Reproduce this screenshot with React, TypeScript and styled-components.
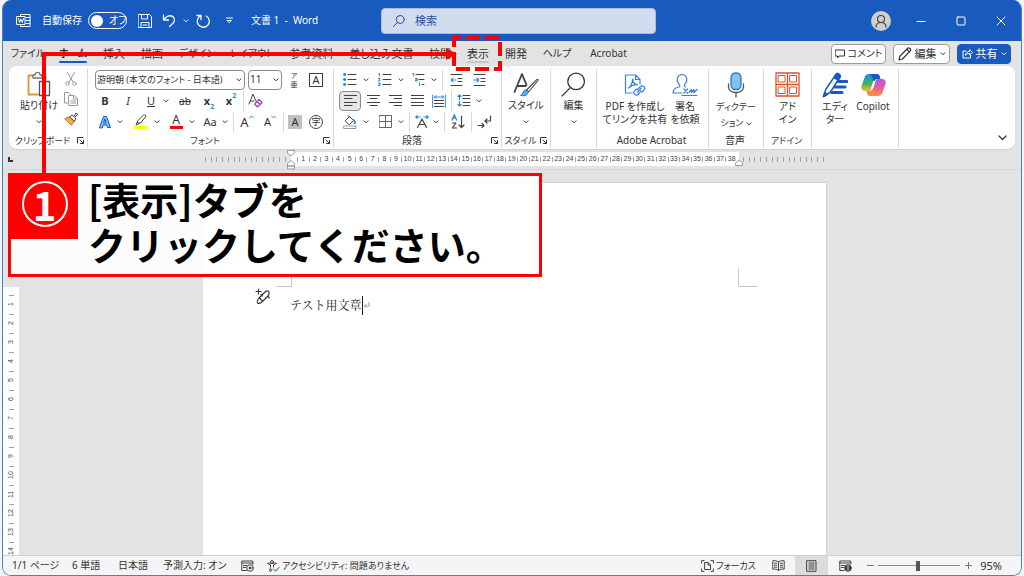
import React from "react";
import styled, { createGlobalStyle } from "styled-components";

const UI = `"Noto Sans", "Noto Sans CJK JP", sans-serif`;
const JP = `"Noto Sans CJK JP", "Noto Sans", sans-serif`;
const BLUE = "#185abd";
const INK = "#424242";
const ACCENT = "#2b88d8";

const Global = createGlobalStyle`
  * { box-sizing: border-box; }
  html, body, #root { margin: 0; height: 100%; }
  body { background: #f4f4f4; font-family: ${UI}; font-size: 10px; line-height: 13px; color: #333; font-feature-settings: "palt"; overflow: hidden; }
  button, input, select { font: inherit; font-feature-settings: inherit; color: inherit; margin: 0; }
  button { background: none; border: 0; padding: 0; }
`;

const Window = styled.div`
  position: relative;
  display: flex;
  flex-direction: column;
  height: 100vh;
  margin: 0 2px;
  border: 1px solid #4a7fcf;
  border-top: 0;
  border-radius: 9px;
  overflow: hidden;
  background: #e3e3e3;
`;

/* ---------- title bar ---------- */
const TitleBar = styled.header`
  display: flex;
  align-items: center;
  height: 41px;
  flex: none;
  background: ${BLUE};
  color: #fff;
`;
const TitleSide = styled.div<{ $end?: boolean }>`
  flex: 1 1 0;
  display: flex;
  align-items: center;
  justify-content: ${(p) => (p.$end ? "flex-end" : "flex-start")};
  padding: ${(p) => (p.$end ? "0" : "0 0 0 13px")};
  white-space: nowrap;
`;
const TitleButton = styled.button<{ $w: number }>`
  display: flex;
  align-items: center;
  justify-content: center;
  width: ${(p) => p.$w}px;
  height: 24px;
`;
const AutoSave = styled.label`
  display: flex;
  align-items: center;
  gap: 6px;
  margin: 0 7px 0 11px;
`;
const Toggle = styled.span`
  display: flex;
  align-items: center;
  gap: 6px;
  width: 39px;
  height: 17px;
  padding: 0 2px;
  border: 1px solid #fff;
  border-radius: 9px;
`;
const ToggleInput = styled.input`
  appearance: none;
  flex: none;
  width: 12px;
  height: 12px;
  border-radius: 50%;
  background: #fff;
`;
const DocName = styled.h1`
  margin: 0 0 0 10px;
  font-size: 10px;
  font-weight: 400;
  white-space: pre;
`;
const SearchBox = styled.label`
  display: flex;
  align-items: center;
  gap: 10px;
  flex: 0 1 275px;
  height: 26px;
  padding: 0 11px;
  border: 1px solid #a9bcdf;
  border-radius: 4px;
  background: #d1dcef;
  color: #1d4f9f;
`;
const SearchInput = styled.input`
  flex: 1;
  min-width: 0;
  border: 0;
  padding: 0;
  background: transparent;
  font-size: 11px;
  &::placeholder { color: #1d4f9f; opacity: 1; }
`;
const Avatar = styled.button`
  display: flex;
  align-items: center;
  justify-content: center;
  width: 20px;
  height: 20px;
  margin-right: 10px;
  border-radius: 50%;
  background: #cfcfcf;
  color: #444;
`;

/* ---------- tabs ---------- */
const TabRow = styled.nav`
  display: flex;
  align-items: center;
  height: 25px;
  flex: none;
  padding: 0 10px 0 2px;
`;
const Tab = styled.button<{ $w: number; $mark?: string }>`
  position: relative;
  width: ${(p) => p.$w}px;
  height: 25px;
  padding-bottom: 1px;
  white-space: nowrap;
  font-size: ${(p) => (p.$w > 40 && p.$w < 60 ? 10 : 11)}px;
  font-weight: ${(p) => (p.$mark === BLUE ? 700 : 400)};
  &::after {
    content: "";
    position: absolute;
    left: 8px;
    right: 8px;
    bottom: 3px;
    height: 2px;
    border-radius: 1px;
    background: ${(p) => p.$mark || "transparent"};
  }
`;
const TabActions = styled.div`
  display: flex;
  gap: 7px;
  margin-left: auto;
`;
const ActionButton = styled.button<{ $w: number; $primary?: boolean }>`
  display: flex;
  align-items: center;
  justify-content: center;
  gap: 3px;
  width: ${(p) => p.$w}px;
  height: 20px;
  white-space: nowrap;
  border: 1px solid ${(p) => (p.$primary ? BLUE : "#9c9c9c")};
  border-radius: 4px;
  background: ${(p) => (p.$primary ? BLUE : "#fff")};
  color: ${(p) => (p.$primary ? "#fff" : "#333")};
`;

/* ---------- ribbon ---------- */
const Ribbon = styled.section`
  display: flex;
  flex: none;
  margin: 0 6px;
  padding: 3px 0 1px;
  background: #fff;
  border-radius: 8px;
  box-shadow: 0 1px 1px #cfcfcf;
`;
const Group = styled.div<{ $w: number }>`
  display: flex;
  flex-direction: column;
  flex: 0 0 ${(p) => p.$w}px;
  border-right: 1px solid #d8d8d8;
`;
const GroupBody = styled.div<{ $pad?: number }>`
  display: flex;
  justify-content: ${(p) => (p.$pad === undefined ? "center" : "flex-start")};
  padding-left: ${(p) => p.$pad || 0}px;
  height: 63px;
`;
const GroupLabel = styled.div`
  display: flex;
  align-items: center;
  height: 16px;
  padding-right: 2px;
  white-space: nowrap;
`;
const LabelText = styled.span<{ $kana?: boolean }>`
  flex: 1;
  text-align: center;
  font-size: ${(p) => (p.$kana ? 9 : 10)}px;
`;
const Rows = styled.div`
  display: flex;
  flex-direction: column;
`;
const Row = styled.div<{ $gap: number }>`
  display: flex;
  align-items: center;
  gap: ${(p) => p.$gap}px;
  height: 21px;
`;
const Tool = styled.button<{ $w?: number; $on?: boolean }>`
  display: flex;
  align-items: center;
  justify-content: center;
  width: ${(p) => p.$w || 20}px;
  height: 20px;
  border: ${(p) => (p.$on ? "1px solid #8a8a8a" : "0")};
  border-radius: 4px;
  background: ${(p) => (p.$on ? "#e6e6e6" : "none")};
`;
const Split = styled.div`
  display: flex;
`;
const Rule = styled.span`
  width: 1px;
  height: 20px;
  background: #d8d8d8;
`;
const Field = styled.div<{ $w: number; $size: number }>`
  position: relative;
  display: flex;
  width: ${(p) => p.$w}px;
  height: 20px;
  font-size: ${(p) => p.$size}px;
`;
const Select = styled.select`
  appearance: none;
  width: 100%;
  height: 20px;
  padding: 0 10px 0 1px;
  border: 1px solid #8a8a8a;
  border-radius: 4px;
  background: #fff;
`;
const FieldArrow = styled.span`
  position: absolute;
  right: 3px;
  top: 0;
  display: flex;
  align-items: center;
  height: 20px;
  pointer-events: none;
`;
const BigButton = styled.button<{ $w: number }>`
  display: flex;
  flex-direction: column;
  align-items: center;
  width: ${(p) => p.$w}px;
  white-space: nowrap;
`;
const BigIcon = styled.span`
  display: flex;
  align-items: center;
  justify-content: center;
  height: 31px;
`;
const SmallColumn = styled.div`
  display: flex;
  flex-direction: column;
`;
const RibbonEnd = styled.div`
  flex: 1;
  display: flex;
  align-items: flex-end;
  justify-content: flex-end;
  padding: 0 7px 0 0;
`;
const Glyph = styled.span<{ $size: number; $bold?: boolean; $italic?: boolean; $line?: string }>`
  font-size: ${(p) => p.$size}px;
  line-height: 16px;
  font-weight: ${(p) => (p.$bold ? 700 : 400)};
  font-style: ${(p) => (p.$italic ? "italic" : "normal")};
  text-decoration: ${(p) => p.$line || "none"};
`;
const Script = styled.span<{ $up?: boolean }>`
  align-self: ${(p) => (p.$up ? "flex-start" : "flex-end")};
  font-size: 7px;
  line-height: 9px;
  font-weight: 700;
  color: ${ACCENT};
`;
const Ruby = styled.span`
  display: flex;
  flex-direction: column;
  align-items: center;
  font-size: 7px;
  line-height: 9px;
`;
const Boxed = styled.span<{ $kind: "frame" | "shade" | "ring" }>`
  display: flex;
  align-items: center;
  justify-content: center;
  width: 14px;
  height: 14px;
  font-size: ${(p) => (p.$kind === "ring" ? 9 : 11)}px;
  border: ${(p) => (p.$kind === "shade" ? "0" : "1px solid #424242")};
  border-radius: ${(p) => (p.$kind === "ring" ? "50%" : "0")};
  background: ${(p) => (p.$kind === "shade" ? "#c0c0c0" : "none")};
`;
const Swatch = styled.span<{ $c: string }>`
  display: flex;
  flex-direction: column;
  align-items: center;
  justify-content: flex-end;
  width: 13px;
  height: 15px;
  font-size: 12px;
  line-height: 12px;
  border-bottom: 3px solid ${(p) => p.$c};
`;

/* ---------- rulers and document ---------- */
const RulerRow = styled.div`
  display: flex;
  flex: none;
  height: 21px;
  border-bottom: 1px solid #d8d8d8;
`;
const TabStop = styled.button`
  display: flex;
  align-items: center;
  justify-content: center;
  width: 16px;
`;
const Centred = styled.div`
  flex: 1;
  display: flex;
  justify-content: center;
  padding-right: 10px;
`;
const Ruler = styled.div`
  display: flex;
  align-items: center;
  width: 624px;
  height: 20px;
`;
const RulerMargin = styled.div<{ $end?: boolean }>`
  flex: 0 0 88px;
  display: flex;
  justify-content: space-between;
  padding: ${(p) => (p.$end ? "0 3px 0 4px" : "0 5px 0 2px")};
`;
const Tick = styled.span`
  width: 1px;
  height: 5px;
  background: #a3a3a3;
`;
const RulerScale = styled.div`
  position: relative;
  flex: 1;
  display: grid;
  grid-template-columns: repeat(38, 1fr);
  align-items: center;
  height: 14px;
  padding: 0 2px 0 6px;
  background: #fff;
  font: 7px/14px "Liberation Sans", sans-serif;
  color: #444;
`;
const Mark = styled.span`
  display: flex;
  align-items: center;
  justify-content: center;
  height: 5px;
  border-left: 1px solid #a3a3a3;
`;
const Indent = styled.span<{ $end?: boolean }>`
  position: absolute;
  top: -2px;
  ${(p) => (p.$end ? "right: -4px;" : "left: -4px;")}
  display: flex;
`;
const Work = styled.main`
  flex: 1;
  display: flex;
  min-height: 0;
`;
const SideRuler = styled.div`
  flex: none;
  width: 16px;
  padding-top: 117px;
  overflow: hidden;
`;
const SideScale = styled.div`
  height: 100%;
  padding-top: 8px;
  overflow: hidden;
  background: #fff;
  font: 7px/8px "Liberation Sans", sans-serif;
  color: #444;
`;
const SideMark = styled.div`
  display: flex;
  flex-direction: column;
  align-items: center;
  height: 19px;
`;
const SideTick = styled.span`
  flex: none;
  width: 5px;
  height: 1px;
  background: #a3a3a3;
`;
const SideNumber = styled.span`
  flex: none;
  display: flex;
  justify-content: center;
  height: 12px;
  margin-top: 2px;
  writing-mode: vertical-rl;
  transform: rotate(180deg);
  text-align: center;
`;
const Page = styled.article`
  width: 624px;
  margin-top: 12px;
  padding-top: 85px;
  background: #fff;
  border-top: 1px solid #d4d4d4;
  border-right: 1px solid #d4d4d4;
`;
const Corners = styled.div`
  display: flex;
  justify-content: space-between;
  padding: 0 69px 0 73px;
`;
const Corner = styled.span<{ $side: "left" | "right" }>`
  width: ${(p) => (p.$side === "left" ? 16 : 19)}px;
  height: 19px;
  border-bottom: 1px solid #c8c8c8;
  border-${(p) => (p.$side === "left" ? "right" : "left")}: 1px solid #c8c8c8;
`;
const TextLine = styled.div`
  display: flex;
  padding: 1px 0 0 52px;
`;
const Paragraph = styled.p`
  display: flex;
  align-items: center;
  margin: 7px 0 0 19px;
  height: 20px;
  font: 12px/20px "Noto Serif CJK JP", "Noto Sans CJK JP", serif;
  font-feature-settings: normal;
  color: #222;
`;
const Caret = styled.span`
  width: 1px;
  height: 19px;
  background: #222;
`;

/* ---------- status bar ---------- */
const StatusBar = styled.footer`
  display: flex;
  align-items: center;
  flex: none;
  height: 20px;
  padding: 0 15px 0 9px;
  border-top: 1px solid #cfcfcf;
  background: #f5f5f5;
  white-space: nowrap;
`;
const StatusItem = styled.button<{ $w?: number; $on?: boolean; $kana?: boolean }>`
  display: flex;
  align-items: center;
  justify-content: ${(p) => (p.$on !== undefined ? "center" : "flex-start")};
  gap: 2px;
  height: 19px;
  width: ${(p) => (p.$w ? p.$w + "px" : "auto")};
  font-size: ${(p) => (p.$kana ? 9 : 10)}px;
  background: ${(p) => (p.$on ? "#dcdcdc" : "none")};
`;
const StatusEnd = styled.div`
  display: flex;
  align-items: center;
  margin-left: auto;
`;
const Zoom = styled.input`
  appearance: none;
  width: 82px;
  height: 12px;
  background: linear-gradient(#8a8a8a, #8a8a8a) center / 100% 1px no-repeat;
  &::-webkit-slider-thumb { appearance: none; width: 4px; height: 10px; background: #555; }
`;

/* ---------- annotation ---------- */
const Callout = styled.aside`
  position: absolute;
  left: 5px;
  top: 173px;
  display: flex;
  align-items: flex-start;
  width: 534px;
  height: 104px;
  border: 3px solid #f00;
  background: rgba(255, 255, 255, 0.87);
`;
const Step = styled.span`
  display: flex;
  align-items: center;
  justify-content: center;
  width: 67px;
  height: 63px;
  padding-bottom: 8px;
  background: #f00;
`;
const StepRing = styled.span`
  display: flex;
  align-items: center;
  justify-content: center;
  width: 46px;
  height: 46px;
  border: 2px solid #fff;
  border-radius: 50%;
  color: #fff;
  font: 700 40px/40px ${JP};
`;
const CalloutText = styled.p`
  margin: 0 0 0 10px;
  font: 700 38px/45px ${JP};
  font-feature-settings: normal;
  color: #000;
  white-space: nowrap;
`;
const Pointer = styled.svg`
  position: absolute;
  left: 0;
  top: 0;
  pointer-events: none;
`;

/* ---------- icons ---------- */
type IconProps = { w?: number; h?: number; vb?: string; c?: string; s?: number; children: React.ReactNode };
const Icon = ({ w = 16, h = w, vb = `0 0 ${w} ${h}`, c = "currentColor", s = 1, children }: IconProps) => (
  <svg width={w} height={h} viewBox={vb} fill="none" stroke={c} strokeWidth={s} strokeLinecap="round" strokeLinejoin="round" aria-hidden>
    {children}
  </svg>
);
const Chevron = () => <Icon w={6} h={4} s={1}><path d="M1 .8 3 2.8 5 .8" /></Icon>;
const Drop = ({ label }: { label: string }) => <Tool $w={10} aria-label={label}><Chevron /></Tool>;
const Launcher = () => (
  <Tool $w={9} aria-label="オプション">
    <Icon w={7}><path d="M.5 6V.5H6M3 3l3 3M6.5 3.5v3h-3" /></Icon>
  </Tool>
);
const Magnifier = ({ size, s = 1 }: { size: number; s?: number }) => (
  <Icon w={size} vb="0 0 24 24" s={s}><circle cx="14.5" cy="9" r="8" /><path d="M9 15 1 23" /></Icon>
);
const lines = (spans: number[][]) => spans.map(([a, b, y], i) => <path key={i} d={`M${a} ${y}H${b}`} />);
const AlignIcon = ({ spans }: { spans: number[][] }) => <Icon w={13} h={13} c={INK} s={1.2}>{lines(spans)}</Icon>;

const scale = Array.from({ length: 38 }, (_, i) => i + 1);
const sideScale = Array.from({ length: 14 }, (_, i) => i + 1);
const ticks = Array.from({ length: 15 }, (_, i) => i);
const tabs: [string, number, string?][] = [
  ["ファイル", 46], ["ホーム", 44, BLUE], ["挿入", 38], ["描画", 38], ["デザイン", 52], ["レイアウト", 58],
  ["参考資料", 61], ["差し込み文書", 79], ["校閲", 38], ["表示", 38, "#c8c8c8"], ["開発", 38], ["ヘルプ", 44], ["Acrobat", 59],
];

const Title = () => (
  <TitleBar>
    <TitleSide>
      <TitleButton $w={15} aria-label="Word">
        <Icon w={15}>
          <path d="M4.5 3V1.5h9.500v12h-9.500V12M10 4.500h4M10 7.500h4M10 10.500h4" />
          <path d="M1 3.500h8v8H1z" fill={BLUE} />
          <path d="m2.500 5.500 1.200 4L5 6l1.300 3.500 1.200-4" />
        </Icon>
      </TitleButton>
      <AutoSave>
        自動保存
        <Toggle><ToggleInput type="checkbox" />オフ</Toggle>
      </AutoSave>
      <TitleButton $w={21} aria-label="上書き保存">
        <Icon w={14}><path d="M.5.5h11l2 2v11H.5zM3.500.5v4.500h6V.5M3 13.500v-5h8v5M5 11h4" /></Icon>
      </TitleButton>
      <TitleButton $w={28} aria-label="元に戻す">
        <Icon w={14} s={1.3}><path d="M1.500 1v5h5M1.800 5.800C4 2.500 8 .5 11 2.700c3 2.700 1 5.800-1 7.600L7.500 12.500" /></Icon>
      </TitleButton>
      <TitleButton $w={6} aria-label="元に戻すの履歴"><Chevron /></TitleButton>
      <TitleButton $w={28} aria-label="やり直し">
        <Icon w={14} s={1.3}><path d="M1 1.500h4v4M5 1.700A6 6 0 1 0 10.200 2" /></Icon>
      </TitleButton>
      <TitleButton $w={24} aria-label="クイック アクセスのカスタマイズ">
        <Icon w={7}><path d="M.5 1h6M1.500 3.500h4l-2 2z" /></Icon>
      </TitleButton>
      <DocName>文書 1  -  Word</DocName>
    </TitleSide>
    <SearchBox>
      <Magnifier size={12} s={2} />
      <SearchInput placeholder="検索" aria-label="検索" />
    </SearchBox>
    <TitleSide $end>
      <Avatar aria-label="アカウント">
        <Icon w={14} s={1.2}><circle cx="7" cy="5" r="3.500" /><path d="M2 13c0-3 2-4.500 5-4.500s5 1.500 5 4.500" /></Icon>
      </Avatar>
      <TitleButton $w={40} aria-label="最小化"><Icon w={10}><path d="M1 5.500h8" /></Icon></TitleButton>
      <TitleButton $w={40} aria-label="最大化"><Icon w={10}><rect x="1" y="1" width="8" height="8" rx="1" /></Icon></TitleButton>
      <TitleButton $w={40} aria-label="閉じる"><Icon w={10}><path d="m1 1 8 8M9 1 1 9" /></Icon></TitleButton>
    </TitleSide>
  </TitleBar>
);

const FontGroup = () => (
  <Group $w={246}>
    <GroupBody $pad={7}>
      <Rows>
        <Row $gap={3}>
          <Field $w={150} $size={9}>
            <Select aria-label="フォント"><option>游明朝 (本文のフォント - 日本語)</option></Select>
            <FieldArrow><Chevron /></FieldArrow>
          </Field>
          <Field $w={34} $size={10}>
            <Select aria-label="フォント サイズ"><option>11</option></Select>
            <FieldArrow><Chevron /></FieldArrow>
          </Field>
          <Tool $w={18} aria-label="ルビ"><Ruby><span>ア</span><span>亜</span></Ruby></Tool>
          <Tool aria-label="囲み線"><Boxed $kind="frame">A</Boxed></Tool>
        </Row>
        <Row $gap={3}>
          <Tool><Glyph $size={11} $bold>B</Glyph></Tool>
          <Tool><Glyph $size={11} $italic>I</Glyph></Tool>
          <Split><Tool><Glyph $size={11} $line="underline">U</Glyph></Tool><Drop label="下線の種類" /></Split>
          <Tool $w={22}><Glyph $size={10} $line="line-through">ab</Glyph></Tool>
          <Tool><Glyph $size={11} $bold>x</Glyph><Script>2</Script></Tool>
          <Tool $w={18}><Glyph $size={11} $bold>x</Glyph><Script $up>2</Script></Tool>
          <Rule />
          <Tool $w={16} aria-label="書式のクリア">
            <Icon w={15} c={INK}>
              <path d="M1 11 5 1l3 7M2.300 8H6" />
              <path d="m7 10.500 4-4 3 3-4 4H9l-2-2zM9 8.500l3 3" stroke="#a03ab5" fill="#fff" strokeWidth="1.300" />
            </Icon>
          </Tool>
        </Row>
        <Row $gap={3}>
          <Split>
            <Tool aria-label="文字の効果">
              <Icon w={14} c={BLUE}><path d="M1.500 12.500 5.500 1.500h3l4 11h-3l-.8-2.500H5.300l-.8 2.500zM6 8h2L7 4.500z" fill="#7cc0f2" /></Icon>
            </Tool>
            <Drop label="文字の効果の種類" />
          </Split>
          <Split>
            <Tool $w={24} aria-label="蛍光ペン">
              <Swatch $c="#ff0">
                <Icon w={13} h={12} c={INK}><path d="m3.500 7 6-6c1.500-.8 3 .5 2 2l-5 6H4zM3.500 7.500 2 11l3.500-1.500" /></Icon>
              </Swatch>
            </Tool>
            <Drop label="蛍光ペンの色" />
          </Split>
          <Split><Tool $w={22} aria-label="フォントの色"><Swatch $c="#f00">A</Swatch></Tool><Drop label="色の選択" /></Split>
          <Split><Tool><Glyph $size={11}>Aa</Glyph></Tool><Drop label="文字種の変換" /></Split>
          <Rule />
          <Tool aria-label="拡大"><Glyph $size={13}>A</Glyph><Script $up><Icon w={5} h={4} c={ACCENT}><path d="M.5 3 2.500 1l2 2" /></Icon></Script></Tool>
          <Tool aria-label="縮小"><Glyph $size={11}>A</Glyph><Script $up><Icon w={5} h={4} c={ACCENT}><path d="m.5 1 2 2 2-2" /></Icon></Script></Tool>
          <Rule />
          <Tool $w={16}><Boxed $kind="shade">A</Boxed></Tool>
          <Tool><Boxed $kind="ring">字</Boxed></Tool>
        </Row>
      </Rows>
    </GroupBody>
    <GroupLabel><LabelText $kana>フォント</LabelText><Launcher /></GroupLabel>
  </Group>
);

const ParagraphGroup = () => (
  <Group $w={168}>
    <GroupBody $pad={5}>
      <Rows>
        <Row $gap={3}>
          <Split>
            <Tool $w={22} aria-label="箇条書き">
              <Icon w={14} h={13} c={INK}>{lines([[5, 13, 1.5], [5, 13, 6.5], [5, 13, 11.5]])}<path d="M1.500 1.500h.2M1.500 6.500h.2M1.500 11.500h.2" stroke={ACCENT} strokeWidth="2.800" /></Icon>
            </Tool>
            <Drop label="行頭文字" />
          </Split>
          <Split>
            <Tool $w={22} aria-label="段落番号">
              <Icon w={14} h={13} c={INK}>{lines([[5, 13, 1.5], [5, 13, 6.5], [5, 13, 11.5]])}<path d="M.8.500h.9v2.500M.5 5.500h1.500L.5 7.800H2M.5 10h1.500v2.500H.5M1 11.200h1" stroke={ACCENT} /></Icon>
            </Tool>
            <Drop label="番号書式" />
          </Split>
          <Split>
            <Tool aria-label="アウトライン">
              <Icon w={14} h={13} c={INK}>{lines([[4, 12, 1.5], [7, 12, 6.5], [10, 12, 11.5]])}<path d="M.8.500h.9v2.500M3.500 5.500h1.800v2.500H3.500V6.800h1.600M7.500 10.500V13M7.500 9v0" stroke={ACCENT} /></Icon>
            </Tool>
            <Drop label="リストの種類" />
          </Split>
          <Rule />
          <Tool aria-label="インデントを減らす">
            <Icon w={13} h={12} c={INK}>{lines([[1, 12, 0.5], [8, 12, 4.5], [8, 12, 7.5], [1, 12, 11.5]])}<path d="M6 6H1.500M3 4.200 1.200 6 3 7.800" stroke={ACCENT} strokeWidth="1.200" /></Icon>
          </Tool>
          <Tool aria-label="インデントを増やす">
            <Icon w={13} h={12} c={INK}>{lines([[1, 12, 0.5], [8, 12, 4.5], [8, 12, 7.5], [1, 12, 11.5]])}<path d="M1 6h4.500M4 4.200 5.800 6 4 7.800" stroke={ACCENT} strokeWidth="1.200" /></Icon>
          </Tool>
        </Row>
        <Row $gap={2}>
          <Tool $w={22} $on aria-label="左揃え"><AlignIcon spans={[[0.5, 12.5, 1.5], [0.5, 8, 4.5], [0.5, 12.5, 8.5], [0.5, 8, 11.5]]} /></Tool>
          <Tool aria-label="中央揃え"><AlignIcon spans={[[0.5, 12.5, 1.5], [3, 10, 4.5], [0.5, 12.5, 8.5], [3, 10, 11.5]]} /></Tool>
          <Tool aria-label="右揃え"><AlignIcon spans={[[0.5, 12.5, 1.5], [5, 12.5, 4.5], [0.5, 12.5, 8.5], [5, 12.5, 11.5]]} /></Tool>
          <Tool aria-label="両端揃え"><AlignIcon spans={[[0.5, 12.5, 1.5], [0.5, 12.5, 4.5], [0.5, 12.5, 8.5], [0.5, 12.5, 11.5]]} /></Tool>
          <Tool aria-label="均等割り付け">
            <Icon w={14} h={14} c={INK}>{lines([[2.5, 11.5, 6.5], [2.5, 11.5, 9.5], [2.5, 11.5, 12.5]])}<path d="M.7 1v12.500M13.300 1v12.500M2.500 3h9M4 1.500 2.500 3 4 4.500M10 1.500 11.500 3 10 4.500" stroke={ACCENT} /></Icon>
          </Tool>
          <Rule />
          <Split>
            <Tool aria-label="行間">
              <Icon w={14} h={13} c={INK}>{lines([[6, 13, 1.5], [6, 13, 4.5], [6, 13, 8.5], [6, 13, 11.5]])}<path d="M2.500 1v4.500M1 2.500 2.500 1 4 2.500M2.500 7.500V12M1 10.500 2.500 12 4 10.500" stroke={ACCENT} strokeWidth="1.200" /></Icon>
            </Tool>
            <Drop label="行間の設定" />
          </Split>
        </Row>
        <Row $gap={3}>
          <Split>
            <Tool $w={22} aria-label="塗りつぶし">
              <Icon w={14} h={14} c={INK}><path d="m2.500 5.500 4-4 4 4-4 4zM5 .5l2 2" /><path d="M11 5c1 1.500 1.500 3 .5 3.500" stroke={ACCENT} strokeWidth="1.600" /><path d="M1 11h12v2.500H1z" stroke="#9a9a9a" /></Icon>
            </Tool>
            <Drop label="塗りつぶしの色" />
          </Split>
          <Split>
            <Tool $w={22} aria-label="罫線"><Icon w={13} c="#666"><path d="M.5.5h12v12H.5zM6.500.5v12M.5 6.500h12" /></Icon></Tool>
            <Drop label="罫線の種類" />
          </Split>
          <Rule />
          <Split>
            <Tool $w={18} aria-label="拡張書式"><Icon w={14} h={13} c={INK} s={1.2}><path d="M2.500 12.500 7 4l4.500 8.500M4.500 9.500h5" /><path d="M5 2H.8M2.200.7.8 2l1.400 1.300M9 2h4.200M11.800.7 13.200 2l-1.400 1.300" stroke={ACCENT} /></Icon></Tool>
            <Drop label="拡張書式の種類" />
          </Split>
          <Rule />
          <Tool aria-label="並べ替え"><Icon w={14} h={15} c={INK} s={1.2}><path d="M1 6 3.300.8 5.600 6M1.800 4.200h3" stroke={ACCENT} strokeWidth="1.300" /><path d="M1.500 9H5l-3.700 5H5.500M10.500 2v11.500M8 11l2.500 2.500L13 11" /></Icon></Tool>
          <Rule />
          <Tool $w={18} aria-label="編集記号"><Icon w={15} h={14} c={INK} s={1.2}><path d="M13.500 1v5H8M10 4 8 6l2 2M1 10.500h6M5 8.500l2 2-2 2" /></Icon></Tool>
        </Row>
      </Rows>
    </GroupBody>
    <GroupLabel><LabelText>段落</LabelText><Launcher /></GroupLabel>
  </Group>
);

const App = () => (
  <>
    <Global />
    <Window>
      <Title />
      <TabRow>
        {tabs.map(([name, w, mark]) => <Tab key={name} $w={w} $mark={mark}>{name}</Tab>)}
        <TabActions>
          <ActionButton $w={55}>
            <Icon w={10}><path d="M.5 1h9v6H4L2.500 9V7h-2z" /></Icon>コメント
          </ActionButton>
          <ActionButton $w={57}>
            <Icon w={14} s={1.2}><path d="m1 13 1-4 8-8c1-.7 3.500 1 2.500 2.700L4.500 12zM9 2.500l2.500 2.500" /></Icon>
            <Glyph $size={11}>編集</Glyph><Chevron />
          </ActionButton>
          <ActionButton $w={54} $primary>
            <Icon w={11}><path d="M4 3H1v7h7.500V7.500M3.500 7c.5-2.500 2-3.500 4-3.500V1.500l3 3-3 2.500V5.500C6 5.500 4.500 6 3.500 7z" /></Icon>
            <Glyph $size={11}>共有</Glyph><Chevron />
          </ActionButton>
        </TabActions>
      </TabRow>

      <Ribbon>
        <Group $w={79}>
          <GroupBody $pad={9}>
            <BigButton $w={42}>
              <BigIcon>
                <Icon w={24} h={26} s={1.3}>
                  <path d="M11 23.500H1.500v-19H6M15 4.500h3.500V9" stroke="#e8912d" strokeWidth="1.800" />
                  <path d="M6 7V4h2c0-3.500 5-3.500 5 0h2v3z" stroke="#777" />
                  <path d="M12.500 10.500h10v14h-10z" stroke="#555" fill="#fff" />
                </Icon>
              </BigIcon>
              貼り付け
              <Tool $w={10} as="span"><Chevron /></Tool>
            </BigButton>
            <SmallColumn>
              <Tool $w={22} aria-label="切り取り"><Icon w={12} h={14} c="#9a9a9a"><path d="m2.500.5 5.800 10M9.500.5 3.700 10.500" /><circle cx="2.500" cy="11.500" r="1.700" /><circle cx="9.500" cy="11.500" r="1.700" /></Icon></Tool>
              <Tool $w={22} aria-label="コピー"><Icon w={14} c="#9a9a9a"><path d="M4.500 11H.5V.5h4L7 3M5 3.500h5l3.500 3V13.500H5zM9.500 3.500v3.500h4M7 9h4.500M7 11h4.500" /></Icon></Tool>
              <Tool $w={22} aria-label="書式のコピー"><Icon w={14} c={INK}><path d="m1 6.500 5-2 4.500 4.500-3 4z" fill="#f7a64b" stroke="#d9731a" /><path d="m6 4.500 2-1.500 2 1.500 2-3.500 1.500 1.200L10.800 5.500 12 7l-1.500 2z" fill="#fff" /></Icon></Tool>
            </SmallColumn>
          </GroupBody>
          <GroupLabel><LabelText $kana>クリップボード</LabelText><Launcher /></GroupLabel>
        </Group>

        <FontGroup />
        <ParagraphGroup />

        <Group $w={49}>
          <GroupBody>
            <BigButton $w={44}>
              <BigIcon>
                <Icon w={26} h={25} c={INK} s={1.8}>
                  <path d="M1.500 20 9 2l4.500 11M4 14h8.500" />
                  <path d="M25 8.500 15.500 20l-2-2L23.500 7.800c1-.8 2 0 1.500.7z" fill="#fff" strokeWidth="1.100" />
                  <path d="M8 23.500c2 0 1.500-5 4.500-5.500 2.500 0 3 2.500 1.500 4.500-1.500 1.500-4 1.500-6 1z" fill="#5aaee8" stroke="#2779bd" strokeWidth="1" />
                </Icon>
              </BigIcon>
              スタイル
              <Tool $w={10} as="span"><Chevron /></Tool>
            </BigButton>
          </GroupBody>
          <GroupLabel><LabelText $kana>スタイル</LabelText><Launcher /></GroupLabel>
        </Group>

        <Group $w={46}>
          <GroupBody>
            <BigButton $w={40}>
              <BigIcon><Magnifier size={25} s={1.2} /></BigIcon>
              編集
              <Tool $w={10} as="span"><Chevron /></Tool>
            </BigButton>
          </GroupBody>
        </Group>

        <Group $w={112}>
          <GroupBody $pad={7}>
            <BigButton $w={62}>
              <BigIcon>
                <Icon w={22} h={24} c="#3b7ded" s={1.2}>
                  <path d="M8 20H1.500V2h10L16 6.500V11M11.500 2v4.500H16M4.500 15c2-1 4-5 4-8 0-1.500 1-1 .5 1 .5 2 2 3.500 4.500 3.800-3-.5-6 .7-9 3.200z" />
                  <path d="m13.500 16.500 3-3c2.500-2 5.500 1 3.500 3.500l-2 2M17 18l-3 3.500c-2.500 2-5.500-1-3.500-3.500l2-2M13.500 19l3.500-3.500" />
                </Icon>
              </BigIcon>
              <span>PDF を作成し</span>
              <span>てリンクを共有</span>
            </BigButton>
            <BigButton $w={38}>
              <BigIcon>
                <Icon w={26} h={24} c="#3b7ded" s={1.2}>
                  <path d="M10 20H1c0-4 2-5 6-6 1-.5 1-1.500.3-2.500C3 6.500 6 1.500 10 1.500s7 5 2.700 10c-.7 1-.5 2 .8 2.500M10 22.500h15M12 16l3.500 4M15.500 16 12 20M17 19.500l2.500-3v3l2.500-3v3l3-3" />
                </Icon>
              </BigIcon>
              <span>署名</span>
              <span>を依頼</span>
            </BigButton>
          </GroupBody>
          <GroupLabel><LabelText>Adobe Acrobat</LabelText></GroupLabel>
        </Group>

        <Group $w={55}>
          <GroupBody>
            <BigButton $w={50}>
              <BigIcon>
                <Icon w={18} h={26} c="#555" s={1.3}>
                  <path d="M1.500 12v2.500c0 4 3 6 7.500 6s7.500-2 7.500-6V12M9 20.500V25" />
                  <rect x="4" y="1" width="10" height="16.500" rx="4.500" fill="#83c0f0" stroke="#2779bd" />
                </Icon>
              </BigIcon>
              <LabelText $kana>ディクテー</LabelText>
              <LabelText $kana>ション <Chevron /></LabelText>
            </BigButton>
          </GroupBody>
          <GroupLabel><LabelText>音声</LabelText></GroupLabel>
        </Group>

        <Group $w={48}>
          <GroupBody>
            <BigButton $w={40}>
              <BigIcon>
                <Icon w={25} c="#dd5228" s={1.3}>
                  <path d="M1 1h23v23H1zM12.500 1v23M1 12.500h23" />
                  <path d="M3.500 3.500H10V10H3.500zM15 3.500h6.500V10H15zM3.500 15H10v6.500H3.500zM15 15h6.500v6.500H15z" strokeWidth="1" />
                </Icon>
              </BigIcon>
              <span>アド</span>
              <span>イン</span>
            </BigButton>
          </GroupBody>
          <GroupLabel><LabelText $kana>アドイン</LabelText></GroupLabel>
        </Group>

        <Group $w={87}>
          <GroupBody $pad={4}>
            <BigButton $w={38}>
              <BigIcon>
                <Icon w={26} c={BLUE} s={1.5}>
                  <path d="M15 9.500h10M13 15h10M10 20.500h10" strokeWidth="3.200" />
                  <path d="M1.500 24.500 4 17 14 2.500c1.500-2 5 0 4 2.500L8.500 20z" fill="#fff" />
                  <path d="M12 5.500 14 2.500c1.500-2 5 0 4 2.500l-1.800 3zM1.500 24.500l1.300-4 2.700 1.800z" fill={BLUE} />
                </Icon>
              </BigIcon>
              <span>エディ</span>
              <span>ター</span>
            </BigButton>
            <BigButton $w={38}>
              <BigIcon>
                <svg width="25" height="24" viewBox="0 0 25 24" aria-hidden>
                  <defs>
                    <linearGradient id="cpA" x1="0" y1="0" x2="0" y2="1"><stop offset="0" stopColor="#1b8fe6" /><stop offset=".55" stopColor="#35b36a" /><stop offset="1" stopColor="#f0c419" /></linearGradient>
                    <linearGradient id="cpB" x1="0" y1="0" x2="0" y2="1"><stop offset="0" stopColor="#a35ff0" /><stop offset=".5" stopColor="#ee5a95" /><stop offset="1" stopColor="#f79650" /></linearGradient>
                  </defs>
                  <path d="M8 1h7.500L10.500 16c-.5 1.500-1.300 2-3 2H4c-3 0-4.200-2-3.500-5L3.500 4.500C4.300 2.200 5.500 1 8 1z" fill="url(#cpA)" />
                  <path d="M8 1h8c2 0 2.500 1 3 3l.6 2h-3c-1.600 0-2.300.6-2.900 2L12 7.500C11 4 11 1.500 8 1z" fill="#1759c4" />
                  <path d="M17 23H9.500L14.500 8c.5-1.500 1.300-2 3-2H21c3 0 4.200 2 3.500 5l-3 8.500C20.700 21.800 19.500 23 17 23z" fill="url(#cpB)" />
                  <path d="M17 23H9c-2 0-2.500-1-3-3l-.6-2h3c1.600 0 2.300-.6 2.900-2l1.700.5C14 20 14 22.500 17 23z" fill="#f58a4b" />
                  <path d="M12.300 8h2.200l-2.600 8H9.700z" fill="#fff" />
                </svg>
              </BigIcon>
              Copilot
            </BigButton>
          </GroupBody>
        </Group>
        <RibbonEnd>
          <Tool $w={12} aria-label="リボンの表示オプション"><Icon w={9} h={6} s={1.2}><path d="m1 1 3.500 3.500L8 1" /></Icon></Tool>
        </RibbonEnd>
      </Ribbon>

      <RulerRow>
        <TabStop aria-label="タブの種類"><Icon w={6} s={2}><path d="M1 1v4h4" strokeLinecap="butt" strokeLinejoin="miter" /></Icon></TabStop>
        <Centred>
          <Ruler>
            <RulerMargin>{ticks.map((t) => <Tick key={t} />)}</RulerMargin>
            <RulerScale>
              {scale.map((n) => <Mark key={n}>{n}</Mark>)}
              <Indent><svg width="8" height="20" viewBox="0 0 8 20" fill="#fff" stroke="#9a9a9a" aria-hidden><path d="M.5.500h7v2.500L4 6 .5 3zM.5 16v-2.500L4 10.500l3.500 3V16zM.5 16h7v3h-7z" /></svg></Indent>
              <Indent $end><svg width="8" height="20" viewBox="0 0 8 20" fill="#fff" stroke="#9a9a9a" aria-hidden><path d="M.5 15.500V13L4 10l3.500 3v2.500z" /></svg></Indent>
            </RulerScale>
            <RulerMargin $end>{ticks.map((t) => <Tick key={t} />)}</RulerMargin>
          </Ruler>
        </Centred>
      </RulerRow>

      <Work>
        <SideRuler>
          <SideScale>
            {sideScale.map((n) => <SideMark key={n}><SideTick /><SideNumber>{n}</SideNumber></SideMark>)}
          </SideScale>
        </SideRuler>
        <Centred>
          <Page>
            <Corners><Corner $side="left" /><Corner $side="right" /></Corners>
            <TextLine>
              <Icon w={16} h={17} c="#333" s={1.1}>
                <path d="M3.500 1v5M1 3.500h5M6 6.500l1.500 1.500M2.500 15c-1-2 .5-4 2.500-6l5-5c1.500-1.500 3.500-1.500 4 0s0 3-1.500 4.500L8 13c-2 2-4 3-5.500 2zM5 9.500c0 2 1.500 3 3 3M12.500 8.500c1.500-.5 1.500 1.500 2 1.500" />
              </Icon>
              <Paragraph>
                テスト用文章<Caret />
                <Icon w={7} h={6} c="#999"><path d="M6 .5V4H1.500M3 2.500 1.500 4 3 5.500" /></Icon>
              </Paragraph>
            </TextLine>
          </Page>
        </Centred>
      </Work>

      <StatusBar>
        <StatusItem $w={60}>1/1 ページ</StatusItem>
        <StatusItem $w={46}>6 単語</StatusItem>
        <StatusItem $w={45}>日本語</StatusItem>
        <StatusItem $w={78}>予測入力: オン</StatusItem>
        <StatusItem $w={26} aria-label="マクロの記録">
          <Icon w={13} h={12} c={INK}><path d="M5.500 10.500H.8V1h11v3.500M.8 3h11M2.500 5.500h3M2.500 7.500h2" /><circle cx="9" cy="8" r="3.300" /><circle cx="9" cy="8" r="1" fill={INK} /></Icon>
        </StatusItem>
        <StatusItem $kana>
          <Icon w={13} h={12} c={INK}><circle cx="5" cy="2" r="1.400" /><path d="M.8 3.500 3.500 5v2.500l-1 3.500c.5 1 1.200.5 1.500 0l1-2M9.200 3.500 6.500 5v2M.8 3.500c.5-1 1.500-.5 2.500 0h3.500c1-.5 2-1 2.500 0M7 9.500l1.500 1.700L12 7.500" /></Icon>
          アクセシビリティ: 問題ありません
        </StatusItem>
        <StatusEnd>
          <StatusItem $w={60} $kana>
            <Icon w={13} h={12} c={INK}><path d="M.6 3V.6H3M10 .6h2.400V3M.6 9v2.400H3M12.400 9v2.400H10M4 2.500h3L9.500 5v4.500H4zM7 2.500V5h2.500" /></Icon>
            フォーカス
          </StatusItem>
          <StatusItem $w={34} $on={false} aria-label="閲覧モード">
            <Icon w={13} h={11} c={INK}><path d="M6.500 2C5 .5 2.500.5.8.8v8.400c2-.3 4-.2 5.700 1.300 1.700-1.500 3.700-1.600 5.700-1.300V.8C10.500.5 8 .5 6.500 2zM6.500 2v8.500M2.500 3.200h2.200M2.500 5.200h2.200M2.500 7.200h2.200M8.300 3.200h2.200M8.300 5.200h2.200M8.300 7.200h2.200" /></Icon>
          </StatusItem>
          <StatusItem $w={33} $on aria-label="印刷レイアウト">
            <Icon w={11} h={12} c={INK}><path d="M1 .7h9v10.600H1zM3 3h5M3 5h5M3 7h5M3 9h5" /></Icon>
          </StatusItem>
          <StatusItem $w={34} $on={false} aria-label="Web レイアウト">
            <Icon w={13} h={12} c={INK}><path d="M5 10.500H.8V1h11v3M.8 3h11M2.500 5.500h3M2.500 7.500h2" /><circle cx="9" cy="8" r="3.300" fill={INK} /><path d="M9 5.500v5" stroke="#ccc" /></Icon>
          </StatusItem>
          <StatusItem $w={16} $on={false} aria-label="縮小"><Icon w={7} c="#777"><path d="M.5 3.500h6" /></Icon></StatusItem>
          <Zoom type="range" min={10} max={186} defaultValue={95} aria-label="ズーム" />
          <StatusItem $w={16} $on={false} aria-label="拡大"><Icon w={7} c="#777"><path d="M.5 3.500h6M3.500.5v6" /></Icon></StatusItem>
          <StatusItem $w={30} $on={false}><Glyph $size={11}>95%</Glyph></StatusItem>
        </StatusEnd>
      </StatusBar>

      <Callout>
        <Step><StepRing>1</StepRing></Step>
        <CalloutText>[表示]タブを<br />クリックしてください。</CalloutText>
      </Callout>
      <Pointer width="520" height="176" viewBox="0 0 520 176" fill="none" stroke="#f00" strokeWidth="4" aria-hidden>
        <path d="M41 174V54H446" />
        <path d="m443 48 11 6-11 6z" fill="#f00" stroke="none" />
        <rect x="451" y="38" width="46" height="31" strokeDasharray="14 5" strokeDashoffset="7" />
      </Pointer>
    </Window>
  </>
);

export default App;
